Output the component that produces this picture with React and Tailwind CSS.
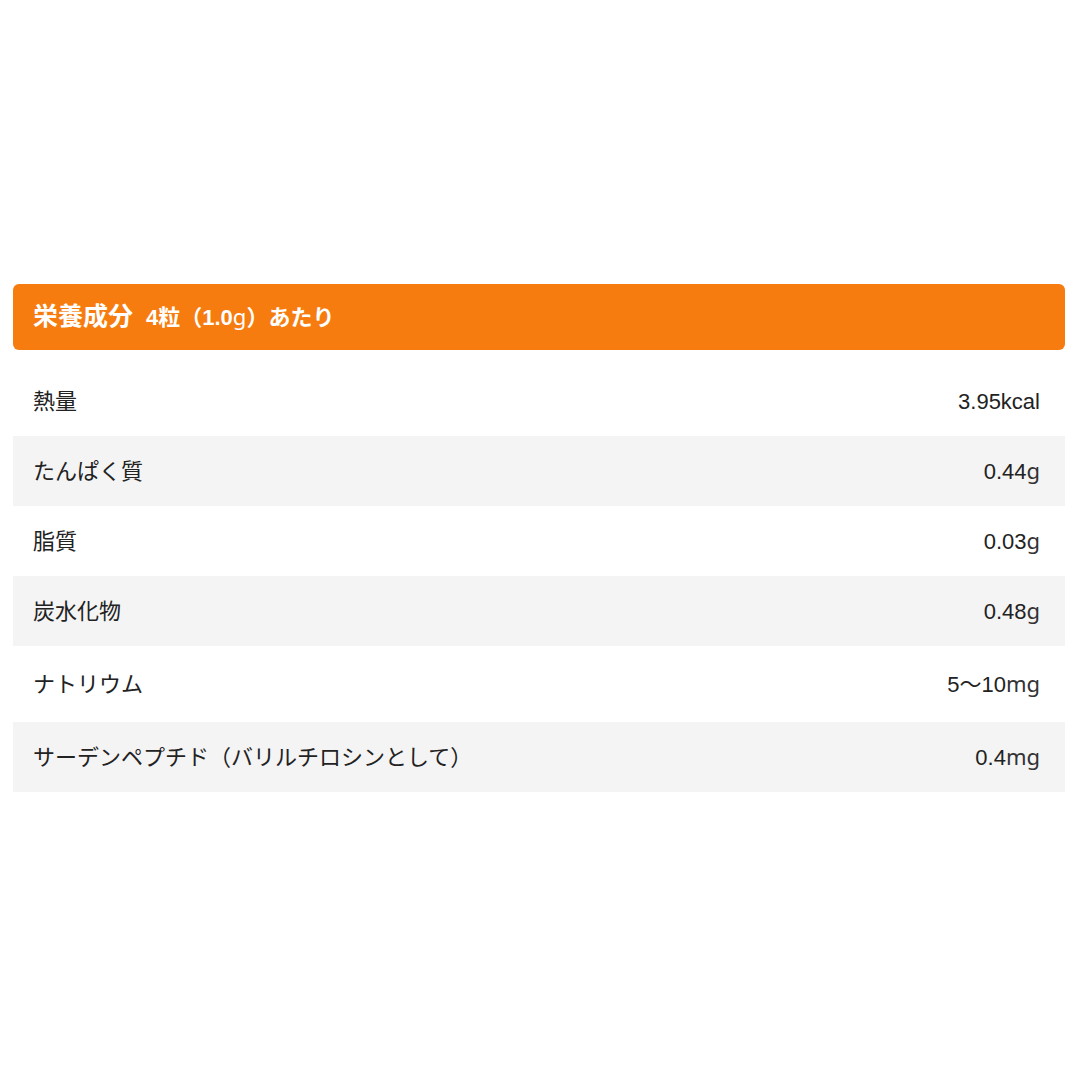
import React from "react";

const rows = [
  { label: "熱量", num: "3.95kcal", unit: "" },
  { label: "たんぱく質", num: "0.44", unit: "g" },
  { label: "脂質", num: "0.03", unit: "g" },
  { label: "炭水化物", num: "0.48", unit: "g" },
  { label: "ナトリウム", num: "5〜10", unit: "mg" },
  { label: "サーデンペプチド（バリルチロシンとして）", num: "0.4", unit: "mg" },
];

const font = {
  fontFamily: '"Liberation Sans", "Noto Sans CJK JP", sans-serif',
};

const App = () => {
  return (
    <div className="w-[1080px] h-[1080px] bg-white pt-[284px] px-[13px]" style={font}>
      <div className="w-[1052px]">
        {/* header */}
        <div className="h-[66px] bg-[#f67c0f] rounded-md flex items-center pl-[20px] text-white font-bold gap-[13px]">
          <span className="text-[25px]">栄養成分</span>
          <span className="text-[22px]">
            4粒（1.0<span className="font-normal" style={{ fontFamily: '"Noto Sans", sans-serif' }}>g</span>）あたり
          </span>
        </div>

        <div className="mt-[16px]">
          {rows.map((r, i) => (
            <div
              key={i}
              className={
                "flex items-center justify-between pl-[20px] pr-[25px] text-[22px] text-[#222] " +
                (i % 2 === 1 ? "bg-[#f4f4f4] " : "bg-white ") +
                (i === 4 ? "h-[76px]" : "h-[70px]")
              }
            >
              <span>{r.label}</span>
              <span>
                {r.num}
                {r.unit && (
                  <span style={{ fontFamily: '"Noto Sans", sans-serif' }} className="text-[#333]">
                    {r.unit}
                  </span>
                )}
              </span>
            </div>
          ))}
        </div>
      </div>
    </div>
  );
};

export default App;
